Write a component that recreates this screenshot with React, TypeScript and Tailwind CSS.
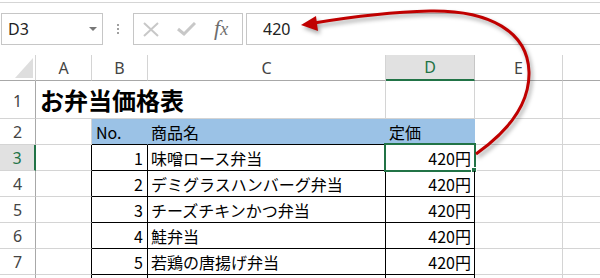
import React from "react";

const cols = "grid grid-cols-[36px_56px_56px_238px_89px_88px_1fr]";
const jp = "font-['Noto_Sans_CJK_JP','Noto_Sans',sans-serif]";
const ui = "font-['Noto_Sans','Noto_Sans_CJK_JP',sans-serif]";

const items = [
  { no: 1, name: "味噌ロース弁当" },
  { no: 2, name: "デミグラスハンバーグ弁当" },
  { no: 3, name: "チーズチキンかつ弁当" },
  { no: 4, name: "鮭弁当" },
  { no: 5, name: "若鶏の唐揚げ弁当" },
];

const RowHead = ({ n, active }: { n?: number; active?: boolean }) => (
  <div
    className={
      active
        ? `flex items-center justify-center bg-[#e1e1e1] border-r-2 border-r-[#217346] border-b border-b-[#d4d4d4] text-[#217346] text-[16px] ${ui}`
        : `flex items-center justify-center border-r border-r-[#a8a8a8] border-b border-b-[#d4d4d4] text-[#444] text-[16px] ${ui}`
    }
  >
    {n}
  </div>
);

const Grid = () => <div className="border-r border-b border-[#d4d4d4]" />;

const Arrow = () => (
  <svg
    className="absolute left-0 top-0 pointer-events-none"
    width="600"
    height="278"
    style={{ filter: "drop-shadow(2px 3px 2px rgba(0,0,0,0.35))" }}
  >
    <path
      d="M 476 154 C 500 137, 530 110, 529 72 C 528 32, 490 10, 430 11 C 390 12, 350 17, 314 23"
      fill="none"
      stroke="#c00000"
      strokeWidth="3"
    />
    <polygon points="301,25 316,16 318,31" fill="#c00000" />
  </svg>
);

export default function App() {
  return (
    <div className="relative w-[600px] h-[278px] overflow-hidden bg-white text-black">
      {/* formula bar */}
      <div className="h-[3px] border-b border-[#d5d5d5]" />
      <div className="flex items-start mt-[10px] h-[32px]">
        <div className={`ml-[1px] w-[102px] h-[32px] border border-[#c6c6c6] flex items-center justify-between pl-[6px] pr-[5px] text-[16px] text-[#222] ${ui}`}>
          <span>D3</span>
          <span className="w-0 h-0 border-l-[4px] border-r-[4px] border-t-[4px] border-l-transparent border-r-transparent border-t-[#777]" />
        </div>
        <div className="w-[30px] h-[32px] flex flex-col items-center justify-center gap-[2px]">
          <span className="w-[2px] h-[2px] bg-[#a0a0a0]" />
          <span className="w-[2px] h-[2px] bg-[#a0a0a0]" />
          <span className="w-[2px] h-[2px] bg-[#a0a0a0]" />
        </div>
        <div className="w-[110px] h-[32px] border border-[#c6c6c6] flex items-center pl-[9px] gap-[18px]">
          <svg width="16" height="15" viewBox="0 0 16 15">
            <path d="M1 1 L15 14 M15 1 L1 14" stroke="#c8c8c8" strokeWidth="2" fill="none" />
          </svg>
          <svg width="19" height="14" viewBox="0 0 19 14">
            <path d="M1 7 L7 12 L18 1" stroke="#c8c8c8" strokeWidth="3" fill="none" />
          </svg>
          <span className="font-['Liberation_Serif',serif] italic text-[22px] leading-none text-[#6d6d6d] -mt-[3px]">
            f<span className="text-[18px]">x</span>
          </span>
        </div>
        <div className={`ml-[3px] flex-1 h-[32px] border border-r-0 border-[#c6c6c6] flex items-center pl-[16px] text-[16px] text-[#222] ${ui}`}>
          420
        </div>
      </div>

      {/* sheet */}
      <div className="mt-[10px]">
        {/* column headers */}
        <div className={`${cols} h-[26px] text-[16px] text-[#444] ${ui}`}>
          <div className="relative border-r border-r-[#d4d4d4] border-b border-b-[#a8a8a8]">
            <svg className="absolute left-[15px] top-[3px]" width="18" height="20">
              <polygon points="18,0 18,20 0,20" fill="#dedede" />
            </svg>
          </div>
          {["A", "B", "C"].map((c) => (
            <div key={c} className="flex items-center justify-center border-r border-r-[#d4d4d4] border-b border-b-[#a8a8a8]">
              {c}
            </div>
          ))}
          <div className="flex items-center justify-center bg-[#e1e1e1] text-[#217346] border-r border-r-[#c6c6c6] border-b-2 border-b-[#217346]">
            D
          </div>
          <div className="flex items-center justify-center border-r border-r-[#d4d4d4] border-b border-b-[#a8a8a8]">E</div>
          <div className="border-b border-b-[#a8a8a8]" />
        </div>

        {/* row 1 */}
        <div className={`${cols} h-[38px]`}>
          <div className={`flex items-end justify-center pb-[5px] border-r border-r-[#a8a8a8] border-b border-b-[#d4d4d4] text-[#444] text-[16px] ${ui}`}>1</div>
          <div className={`col-span-3 flex items-end pl-[4px] pb-[6px] border-r border-b border-[#d4d4d4] font-bold text-[24px] leading-none whitespace-nowrap ${jp}`}>
            お弁当価格表
          </div>
          <Grid />
          <Grid />
          <div className="border-b border-[#d4d4d4]" />
        </div>

        {/* row 2 */}
        <div className={`${cols} h-[26px] text-[16px] ${jp}`}>
          <RowHead n={2} />
          <Grid />
          <div className="flex items-center pl-[4px] bg-[#9bc2e6] border-r border-r-[#9bc2e6] border-b border-b-black">No.</div>
          <div className="flex items-center pl-[3px] bg-[#9bc2e6] border-r border-r-[#9bc2e6] border-b border-b-black">商品名</div>
          <div className="flex items-center pl-[3px] bg-[#9bc2e6] border-r border-r-[#9bc2e6] border-b border-b-black">定価</div>
          <Grid />
          <div className="border-b border-[#d4d4d4]" />
        </div>

        {/* data rows */}
        {items.map((it, i) => (
          <div key={it.no} className={`${cols} h-[26px] text-[16px] ${jp}`}>
            <RowHead n={i + 3} active={i === 0} />
            <div className="border-r border-r-black border-b border-b-[#d4d4d4]" />
            <div className="flex items-center justify-end pr-[4px] border-r border-b border-black">{it.no}</div>
            <div className="flex items-center pl-[3px] border-r border-b border-black whitespace-nowrap">{it.name}</div>
            <div className="relative flex items-center justify-end pr-[3px] border-r border-b border-black">
              420円
              {i === 0 && (
                <>
                  <span className="absolute -left-[2px] -top-[2px] w-[92px] h-[29px] border-2 border-[#217346]" />
                  <span className="absolute left-[85px] top-[22px] w-[6px] h-[6px] bg-[#217346] border border-white" />
                </>
              )}
            </div>
            <Grid />
            <div className="border-b border-[#d4d4d4]" />
          </div>
        ))}

        {/* row 8, mostly below the fold */}
        <div className={`${cols} h-[26px]`}>
          <RowHead />
          <div className="border-r border-r-black border-b border-b-[#d4d4d4]" />
          <div className="border-r border-b border-black" />
          <div className="border-r border-b border-black" />
          <div className="border-r border-b border-black" />
          <Grid />
          <div className="border-b border-[#d4d4d4]" />
        </div>
      </div>

      <Arrow />
    </div>
  );
}
